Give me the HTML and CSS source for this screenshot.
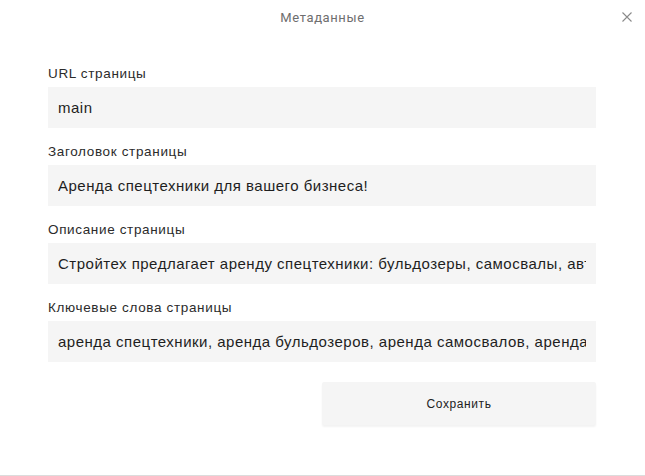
FILE: index.html
```html
<!DOCTYPE html>
<html lang="ru">
<head>
<meta charset="utf-8">
<title>Метаданные</title>
<link rel="stylesheet" href="styles.css">
</head>
<body>
<div class="modal">
  <header class="modal-header">
    <span class="modal-title">Метаданные</span>
    <button class="close" aria-label="Закрыть">
      <svg width="10" height="10" viewBox="0 0 10 10"><path d="M0.5 0.5L9.5 9.5M9.5 0.5L0.5 9.5" stroke="#8a8a8a" stroke-width="1.1" fill="none"/></svg>
    </button>
  </header>
  <form class="form">
    <div class="field">
      <label class="label">URL страницы</label>
      <div class="input"><span class="value">main</span></div>
    </div>
    <div class="field">
      <label class="label">Заголовок страницы</label>
      <div class="input"><span class="value">Аренда спецтехники для вашего бизнеса!</span></div>
    </div>
    <div class="field">
      <label class="label">Описание страницы</label>
      <div class="input"><span class="value">Стройтех предлагает аренду спецтехники: бульдозеры, самосвалы, автокраны и экскаваторы.</span></div>
    </div>
    <div class="field">
      <label class="label">Ключевые слова страницы</label>
      <div class="input"><span class="value">аренда спецтехники, аренда бульдозеров, аренда самосвалов, аренда автокранов</span></div>
    </div>
    <div class="actions">
      <button type="button" class="save">Сохранить</button>
    </div>
  </form>
</div>
</body>
</html>
```
FILE: styles.css
```css
* { box-sizing: border-box; }
html, body { margin: 0; padding: 0; background: #fff; }
body { font-family: "Liberation Sans", Arial, sans-serif; color: #222; }
.modal {
  width: 645px;
  height: 476px;
  border-bottom: 1px solid #dcdcdc;
  display: flex;
  flex-direction: column;
}
.modal-header {
  height: 34px;
  display: flex;
  align-items: center;
  justify-content: center;
  position: relative;
}
.modal-title {
  font-family: Roboto, sans-serif;
  font-size: 13px;
  letter-spacing: 0.6px;
  color: #6e6e6e;
}
.close {
  position: absolute;
  right: 13px;
  top: 12px;
  width: 10px;
  height: 10px;
  padding: 0;
  border: 0;
  background: none;
  display: flex;
}
.form {
  padding: 30px 49px 0 48px;
  display: flex;
  flex-direction: column;
  gap: 14px;
}
.field { display: flex; flex-direction: column; }
.label {
  font-size: 13.5px;
  line-height: 20px;
  letter-spacing: 0.65px;
  color: #2b2b2b;
  margin-bottom: 3px;
}
.input {
  height: 41px;
  background: #f5f5f5;
  padding: 0 10px;
  display: flex;
  align-items: center;
}
.value {
  display: block;
  width: 100%;
  overflow: hidden;
  white-space: nowrap;
  font-size: 15px;
  letter-spacing: 0.5px;
  line-height: 20px;
  color: #1e1e1e;
}
.actions {
  display: flex;
  justify-content: flex-end;
  margin-top: 6px;
}
.save {
  width: 274px;
  height: 43px;
  border: 0;
  border-radius: 2px;
  background: #f5f5f5;
  box-shadow: 0 2px 2px rgba(0,0,0,0.05);
  font-family: "Liberation Sans", Arial, sans-serif;
  font-size: 12px;
  letter-spacing: 0.6px;
  color: #222;
}
```
